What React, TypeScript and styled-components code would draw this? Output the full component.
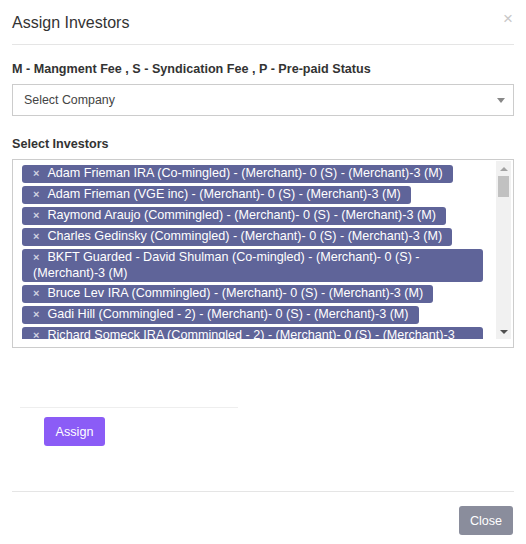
import React from "react";
import styled, { createGlobalStyle } from "styled-components";

const GlobalStyle = createGlobalStyle`
  html, body {
    margin: 0;
    padding: 0;
    background: #fff;
  }
  body {
    font-family: "Liberation Sans", Arial, sans-serif;
    color: #333;
  }
  * {
    box-sizing: border-box;
  }
`;

const Modal = styled.div`
  width: 526px;
  height: 544px;
  display: flex;
  flex-direction: column;
  background: #fff;
`;

const Header = styled.div`
  height: 45px;
  margin: 0 12px;
  border-bottom: 1px solid #e5e5e5;
  display: flex;
  align-items: center;
  justify-content: space-between;
`;

const Title = styled.h4`
  margin: 0;
  font-size: 16px;
  font-weight: 400;
  color: #333;
  padding-top: 2px;
`;

const CloseX = styled.button`
  border: none;
  background: none;
  padding: 0;
  margin-right: 1px;
  margin-top: -8px;
  font-size: 17px;
  line-height: 1;
  color: #c8c8c8;
  cursor: pointer;
  font-family: "Liberation Sans", Arial, sans-serif;
`;

const Body = styled.div`
  padding: 16px 12px 0;
  display: flex;
  flex-direction: column;
`;

const Label = styled.label<{ $gap?: number }>`
  display: block;
  font-size: 12.6px;
  font-weight: 700;
  line-height: 16px;
  color: #333;
  margin-top: ${({ $gap }) => $gap ?? 0}px;
  margin-bottom: 7px;
`;

const SelectBox = styled.div`
  height: 32px;
  border: 1px solid #ccc;
  display: flex;
  align-items: center;
  justify-content: space-between;
  padding: 0 8px 0 11px;
  font-size: 12.4px;
  color: #444;
`;

const Caret = styled.span`
  width: 0;
  height: 0;
  border-left: 4px solid transparent;
  border-right: 4px solid transparent;
  border-top: 5px solid #888;
`;

const MultiBox = styled.div`
  height: 189px;
  border: 1px solid #ccc;
  padding: 1px 2px 8px 9px;
  display: flex;
  gap: 10px;
`;

const TagList = styled.ul`
  flex: 1;
  list-style: none;
  margin: 0;
  padding: 4px 0 0 0;
  overflow: hidden;
  display: flex;
  flex-direction: column;
  align-items: flex-start;
  gap: 3px;
`;

const Tag = styled.li`
  flex-shrink: 0;
  max-width: 461px;
  background: #5f6499;
  color: #fff;
  border-radius: 3px;
  padding: 1px 10px 1px 11px;
  font-size: 12.6px;
  line-height: 15.5px;
  min-height: 18px;
`;

const TagRemove = styled.span`
  color: #d0d2e2;
  font-size: 11px;
  margin-right: 8px;
  font-weight: 700;
`;

const ScrollTrack = styled.div`
  width: 15px;
  flex-shrink: 0;
  background: #f1f1f1;
  display: flex;
  flex-direction: column;
  align-items: center;
`;

const ScrollArrow = styled.div<{ $down?: boolean }>`
  height: 15px;
  width: 15px;
  display: flex;
  align-items: center;
  justify-content: center;
  &::after {
    content: "";
    width: 0;
    height: 0;
    border-left: 4px solid transparent;
    border-right: 4px solid transparent;
    ${({ $down }) =>
      $down
        ? "border-top: 4px solid #505050;"
        : "border-bottom: 4px solid #a3a3a3;"}
  }
`;

const ScrollThumb = styled.div`
  width: 11px;
  height: 21px;
  background: #c1c1c1;
`;

const ScrollGap = styled.div`
  flex: 1;
`;

const Spacer = styled.div`
  height: 59px;
`;

const Divider = styled.hr`
  margin: 0 0 0 8px;
  width: 218px;
  border: none;
  border-top: 1px solid #eeeeee;
`;

const AssignButton = styled.button`
  margin: 9px 0 0 32px;
  width: 61px;
  height: 29px;
  border: none;
  border-radius: 3px;
  background: #8b5cf6;
  color: #fff;
  font-family: "Liberation Sans", Arial, sans-serif;
  font-size: 12.6px;
  cursor: pointer;
`;

const Footer = styled.div`
  margin: auto 12px 0;
  border-top: 1px solid #e5e5e5;
  padding: 14px 0 9px;
  display: flex;
  justify-content: flex-end;
`;

const CloseButton = styled.button`
  width: 54px;
  height: 29px;
  margin-right: 1px;
  border: none;
  border-radius: 3px;
  background: #8a8d9c;
  color: #fff;
  font-family: "Liberation Sans", Arial, sans-serif;
  font-size: 12.6px;
  cursor: pointer;
`;

const investors = [
  "Adam Frieman IRA (Co-mingled) - (Merchant)- 0 (S) - (Merchant)-3 (M)",
  "Adam Frieman (VGE inc) - (Merchant)- 0 (S) - (Merchant)-3 (M)",
  "Raymond Araujo (Commingled) - (Merchant)- 0 (S) - (Merchant)-3 (M)",
  "Charles Gedinsky (Commingled) - (Merchant)- 0 (S) - (Merchant)-3 (M)",
  "BKFT Guarded - David Shulman (Co-mingled) - (Merchant)- 0 (S) - (Merchant)-3 (M)",
  "Bruce Lev IRA (Commingled) - (Merchant)- 0 (S) - (Merchant)-3 (M)",
  "Gadi Hill (Commingled - 2) - (Merchant)- 0 (S) - (Merchant)-3 (M)",
  "Richard Someck IRA (Commingled - 2) - (Merchant)- 0 (S) - (Merchant)-3 (M)",
  "Steven Kaplan (Commingled) - (Merchant)- 0 (S) - (Merchant)-3 (M)",
];

export default function App() {
  return (
    <>
      <GlobalStyle />
      <Modal>
        <Header>
          <Title>Assign Investors</Title>
          <CloseX aria-label="close">×</CloseX>
        </Header>
        <Body>
          <Label>M - Mangment Fee , S - Syndication Fee , P - Pre-paid Status</Label>
          <SelectBox>
            <span>Select Company</span>
            <Caret />
          </SelectBox>
          <Label $gap={20}>Select Investors</Label>
          <MultiBox>
            <TagList>
              {investors.map((name) => (
                <Tag key={name}>
                  <TagRemove>×</TagRemove>
                  {name}
                </Tag>
              ))}
            </TagList>
            <ScrollTrack>
              <ScrollArrow />
              <ScrollThumb />
              <ScrollGap />
              <ScrollArrow $down />
            </ScrollTrack>
          </MultiBox>
          <Spacer />
          <Divider />
          <div>
            <AssignButton>Assign</AssignButton>
          </div>
        </Body>
        <Footer>
          <CloseButton>Close</CloseButton>
        </Footer>
      </Modal>
    </>
  );
}
